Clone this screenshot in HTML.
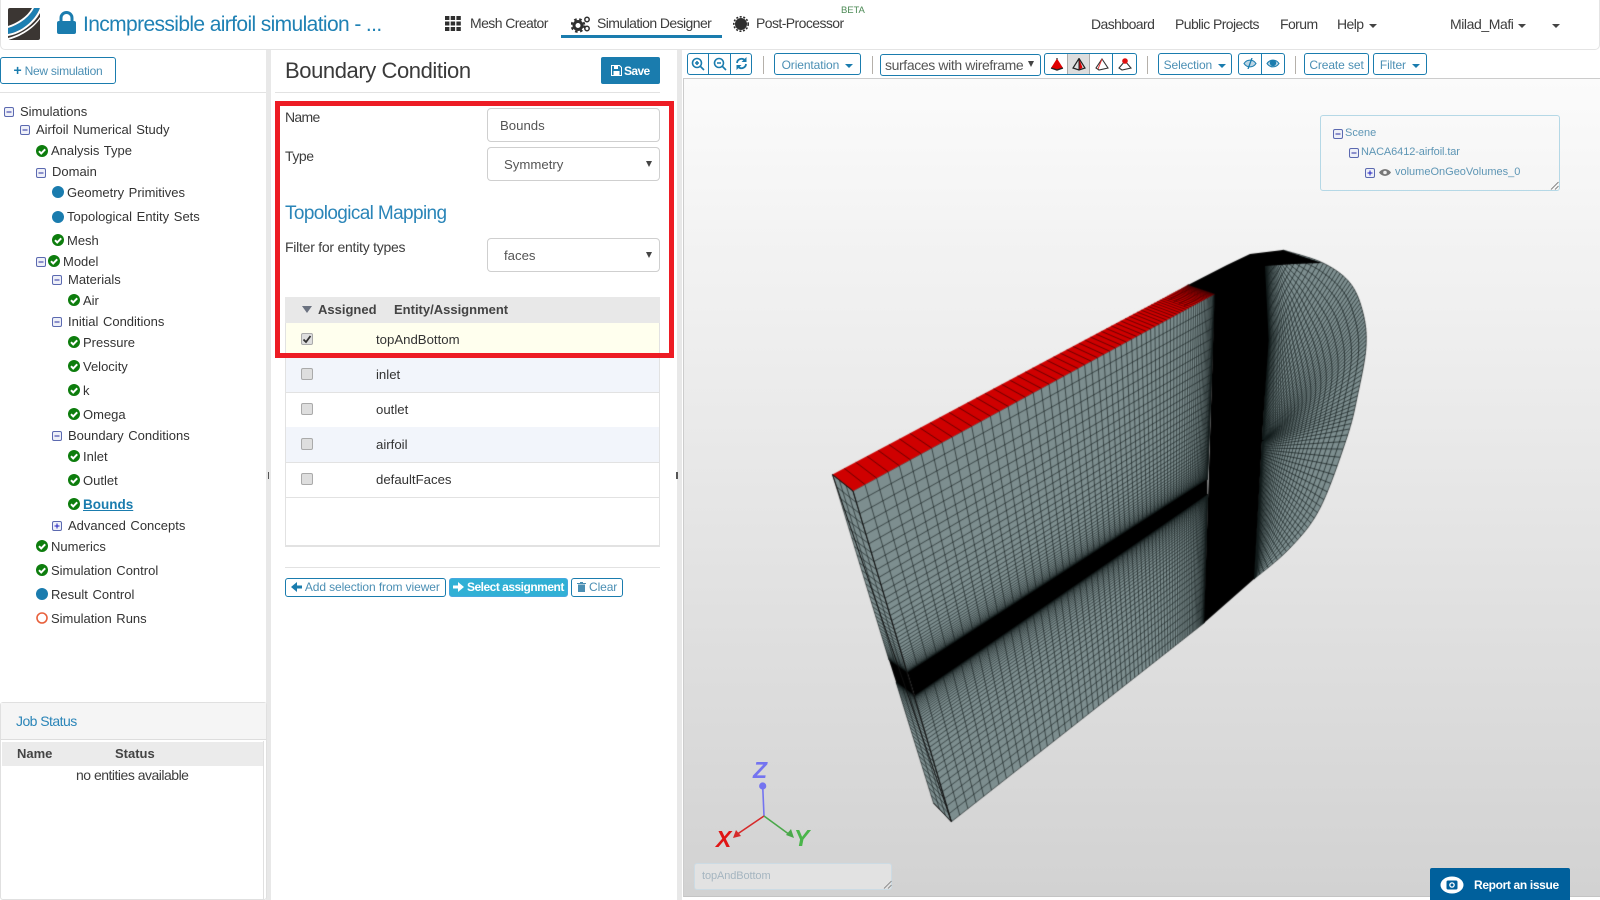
<!DOCTYPE html>
<html><head><meta charset="utf-8"><title>Boundary Condition</title>
<style>
html,body{margin:0;padding:0;background:#fff}
body{position:relative;width:1600px;height:900px;overflow:hidden;font-family:"Liberation Sans",Arial,sans-serif;color:#333}
.a{position:absolute;box-sizing:border-box}
.t{position:absolute;white-space:nowrap;line-height:20px;font-size:14px}
.k{font-size:13px;word-spacing:1px;margin-top:1px}
.r{font-size:13.2px;margin-top:1px}
.l{font-size:14px;letter-spacing:-.45px}
.nav{font-size:14px;letter-spacing:-.58px;color:#3d3d3d}
.ic{position:absolute;width:12px;height:12px;overflow:visible}
.bx{position:absolute;width:10px;height:10px;overflow:visible}
.btn{position:absolute;box-sizing:border-box;border:1px solid #1a7cae;border-radius:3px;color:#4b8fb4;font-size:12px;letter-spacing:-.1px;text-align:center;background:#fff;white-space:nowrap}
.car{display:inline-block;width:0;height:0;border-left:4px solid transparent;border-right:4px solid transparent;border-top:4px solid #1a7cae;vertical-align:middle;margin-left:3px}
.dc{position:absolute;width:0;height:0;border-left:4px solid transparent;border-right:4px solid transparent;border-top:4px solid #444}
.inp{position:absolute;box-sizing:border-box;left:487px;width:173px;height:34px;border:1px solid #cfcfcf;border-radius:4px;background:#fff;line-height:34px;font-size:13.2px;color:#555}
.cb{position:absolute;left:301px;width:12px;height:12px;box-sizing:border-box;background:#dedede;border:1px solid #aaa;border-radius:2px}
.tr{position:absolute;left:286px;width:373px;height:35px;border-bottom:1px solid #e2e2e2;box-sizing:border-box}
.sep{position:absolute;width:1px;height:18px;background:#b5b0aa;top:56px}
</style></head><body>
<svg width="0" height="0" style="position:absolute"><defs>
<symbol id="c" viewBox="0 0 12 12"><circle cx="6" cy="6" r="6" fill="#0d7d0d"/><path d="M3 6.2l2.2 2.2L9.2 4.3" fill="none" stroke="#fff" stroke-width="2"/></symbol>
<symbol id="m" viewBox="0 0 10 10"><rect x=".5" y=".5" width="9" height="9" rx="1.5" fill="#eef0f8" stroke="#5b69b0"/><path d="M2.5 5h5" stroke="#2a2fa0" stroke-width="1"/></symbol>
<symbol id="p" viewBox="0 0 10 10"><rect x=".5" y=".5" width="9" height="9" rx="1.5" fill="#eef0f8" stroke="#5b69b0"/><path d="M2.5 5h5M5 2.5v5" stroke="#2020c0" stroke-width="1"/></symbol>
<symbol id="b" viewBox="0 0 12 12"><circle cx="6" cy="6" r="6" fill="#1a7cae"/></symbol>
</defs></svg>

<!-- header -->
<div class="a" style="left:0;top:0;width:1600px;height:50px;border:1px solid #e4e4e4;border-top:0;border-radius:0 0 5px 5px;background:#fff"></div>
<svg class="a" style="left:8px;top:8px" width="32" height="32" viewBox="0 0 32 32"><rect width="32" height="32" rx="2" fill="#3b3633"/><path d="M0 20C10 17 21 10 26 0h6C27 13 13 24 0 26z" fill="#1c7fb2"/><path d="M0 20C10 17 21 10 26 0h-2C19 9 9 15 0 18z" fill="#fff"/><path d="M0 26C13 24 27 13 32 0v5C26 16 13 26 0 28z" fill="#fff"/><path d="M0 32C12 29 25 21 32 11v-2C25 19 12 27 0 30z" fill="#fff"/></svg>
<svg class="a" style="left:57px;top:11px" width="19" height="23" viewBox="0 0 19 23"><path d="M4 11V7a5.5 5.5 0 0 1 11 0v4" fill="none" stroke="#1a7cae" stroke-width="3"/><rect x="0" y="10" width="19" height="13" rx="2" fill="#1a7cae"/></svg>
<div class="t" style="left:83px;top:15px;font-size:21px;color:#1f81b4;letter-spacing:-.62px">Incmpressible airfoil simulation - ...</div>
<svg class="a" style="left:445px;top:16px" width="16" height="15" viewBox="0 0 16 15" fill="#2f2f2f"><rect width="4.4" height="4"/><rect x="5.7" width="4.4" height="4"/><rect x="11.4" width="4.4" height="4"/><rect y="5.5" width="4.4" height="4"/><rect x="5.7" y="5.5" width="4.4" height="4"/><rect x="11.4" y="5.5" width="4.4" height="4"/><rect y="11" width="4.4" height="4"/><rect x="5.7" y="11" width="4.4" height="4"/><rect x="11.4" y="11" width="4.4" height="4"/></svg>
<div class="t nav" style="left:470px;top:13px">Mesh Creator</div>
<svg class="a" style="left:571px;top:15px" width="20" height="18" viewBox="0 0 20 18"><circle cx="7" cy="10.5" r="4" fill="none" stroke="#2f2f2f" stroke-width="3"/><circle cx="7" cy="10.5" r="6.4" fill="none" stroke="#2f2f2f" stroke-width="2" stroke-dasharray="2.6 2.6"/><circle cx="16" cy="4.5" r="2.2" fill="none" stroke="#2f2f2f" stroke-width="1.5"/><circle cx="16" cy="13.5" r="2.2" fill="none" stroke="#2f2f2f" stroke-width="1.5"/></svg>
<div class="t nav" style="left:597px;top:13px">Simulation Designer</div>
<div class="a" style="left:561px;top:35px;width:161px;height:3px;background:#1a7cae"></div>
<svg class="a" style="left:733px;top:16px" width="16" height="16" viewBox="0 0 16 16"><circle cx="8" cy="8" r="6" fill="#2f2f2f"/><circle cx="8" cy="8" r="7.2" fill="none" stroke="#2f2f2f" stroke-width="1.6" stroke-dasharray="2 1.6"/></svg>
<div class="t nav" style="left:756px;top:13px">Post-Processor</div>
<div class="t" style="left:841px;top:1px;font-size:9.5px;color:#4c8a55;letter-spacing:-.1px">BETA</div>
<div class="t nav" style="left:1091px;top:14px">Dashboard</div>
<div class="t nav" style="left:1175px;top:14px">Public Projects</div>
<div class="t nav" style="left:1280px;top:14px">Forum</div>
<div class="t nav" style="left:1337px;top:14px">Help</div><div class="dc" style="left:1369px;top:24px"></div>
<div class="t nav" style="left:1450px;top:14px;letter-spacing:-.42px">Milad_Mafi</div><div class="dc" style="left:1518px;top:24px"></div>
<div class="dc" style="left:1552px;top:24px"></div>

<!-- dividers -->
<div class="a" style="left:266px;top:50px;width:5px;height:850px;background:#e8e8e8"></div>
<div class="a" style="left:677px;top:50px;width:5px;height:850px;background:#e8e8e8"></div>
<div class="a" style="left:268px;top:472px;width:1px;height:7px;background:#555"></div>
<div class="a" style="left:676px;top:472px;width:2px;height:7px;background:#555"></div>

<!-- left -->
<div class="btn" style="left:0;top:57px;width:116px;height:27px;line-height:25px;letter-spacing:-.25px"><b style="color:#1a7cae;font-size:14px">+</b> New simulation</div>
<div class="a" style="left:0;top:92px;width:266px;height:1px;background:#e2e2e2"></div>

<svg class="bx" style="left:4px;top:107px"><use href="#m"/></svg><div class="t k" style="left:20px;top:101px">Simulations</div>
<svg class="bx" style="left:20px;top:125px"><use href="#m"/></svg><div class="t k" style="left:36px;top:119px">Airfoil Numerical Study</div>
<svg class="ic" style="left:36px;top:145px"><use href="#c"/></svg><div class="t k" style="left:51px;top:140px">Analysis Type</div>
<svg class="bx" style="left:36px;top:168px"><use href="#m"/></svg><div class="t k" style="left:52px;top:161px">Domain</div>
<svg class="ic" style="left:52px;top:186px"><use href="#b"/></svg><div class="t k" style="left:67px;top:182px">Geometry Primitives</div>
<svg class="ic" style="left:52px;top:211px"><use href="#b"/></svg><div class="t k" style="left:67px;top:206px">Topological Entity Sets</div>
<svg class="ic" style="left:52px;top:234px"><use href="#c"/></svg><div class="t k" style="left:67px;top:230px">Mesh</div>
<svg class="bx" style="left:36px;top:257px"><use href="#m"/></svg><svg class="ic" style="left:48px;top:255px"><use href="#c"/></svg><div class="t k" style="left:63px;top:251px">Model</div>
<svg class="bx" style="left:52px;top:275px"><use href="#m"/></svg><div class="t k" style="left:68px;top:269px">Materials</div>
<svg class="ic" style="left:68px;top:294px"><use href="#c"/></svg><div class="t k" style="left:83px;top:290px">Air</div>
<svg class="bx" style="left:52px;top:317px"><use href="#m"/></svg><div class="t k" style="left:68px;top:311px">Initial Conditions</div>
<svg class="ic" style="left:68px;top:336px"><use href="#c"/></svg><div class="t k" style="left:83px;top:332px">Pressure</div>
<svg class="ic" style="left:68px;top:360px"><use href="#c"/></svg><div class="t k" style="left:83px;top:356px">Velocity</div>
<svg class="ic" style="left:68px;top:384px"><use href="#c"/></svg><div class="t k" style="left:83px;top:380px">k</div>
<svg class="ic" style="left:68px;top:408px"><use href="#c"/></svg><div class="t k" style="left:83px;top:404px">Omega</div>
<svg class="bx" style="left:52px;top:431px"><use href="#m"/></svg><div class="t k" style="left:68px;top:425px">Boundary Conditions</div>
<svg class="ic" style="left:68px;top:450px"><use href="#c"/></svg><div class="t k" style="left:83px;top:446px">Inlet</div>
<svg class="ic" style="left:68px;top:474px"><use href="#c"/></svg><div class="t k" style="left:83px;top:470px">Outlet</div>
<svg class="ic" style="left:68px;top:498px"><use href="#c"/></svg><div class="t" style="left:83px;top:495px;color:#1a7cae;font-weight:bold;font-size:13.5px;text-decoration:underline">Bounds</div>
<svg class="bx" style="left:52px;top:521px"><use href="#p"/></svg><div class="t k" style="left:68px;top:515px">Advanced Concepts</div>
<svg class="ic" style="left:36px;top:540px"><use href="#c"/></svg><div class="t k" style="left:51px;top:536px">Numerics</div>
<svg class="ic" style="left:36px;top:564px"><use href="#c"/></svg><div class="t k" style="left:51px;top:560px">Simulation Control</div>
<svg class="ic" style="left:36px;top:588px"><use href="#b"/></svg><div class="t k" style="left:51px;top:584px">Result Control</div>
<svg class="ic" style="left:36px;top:612px"><circle cx="6" cy="6" r="5" fill="none" stroke="#e8603c" stroke-width="1.6"/></svg><div class="t k" style="left:51px;top:608px">Simulation Runs</div>

<!-- job status -->
<div class="a" style="left:0;top:702px;width:267px;height:198px;border:1px solid #e0e0e0;border-radius:3px;background:#fff"></div>
<div class="a" style="left:1px;top:703px;width:265px;height:37px;background:#f5f5f5;border-bottom:1px solid #ddd"></div>
<div class="t" style="left:16px;top:711px;color:#2a85b8;font-size:14px;letter-spacing:-.55px">Job Status</div>
<div class="a" style="left:2px;top:742px;width:261px;height:24px;background:#ebebeb"></div>
<div class="a" style="left:263px;top:741px;width:1px;height:159px;background:#e0e0e0"></div>
<div class="t" style="left:17px;top:744px;font-weight:bold;font-size:13px;color:#444">Name</div>
<div class="t" style="left:115px;top:744px;font-weight:bold;font-size:13px;color:#444">Status</div>
<div class="t" style="left:76px;top:765px;font-size:14px;letter-spacing:-.5px;color:#3d3d3d">no entities available</div>

<!-- middle -->
<div class="t" style="left:285px;top:60px;font-size:22px;letter-spacing:-.42px;color:#3a3a3a;line-height:22px">Boundary Condition</div>
<div class="a" style="left:601px;top:57px;width:59px;height:27px;background:#1a7cae;border-radius:2px"></div>
<svg class="a" style="left:611px;top:65px" width="11" height="11" viewBox="0 0 11 11"><path d="M.5.5h8l2 2v8h-10z" fill="none" stroke="#fff"/><rect x="2.5" y="6" width="6" height="4.5" fill="#fff"/><rect x="3" y="1" width="4" height="3" fill="#fff"/></svg>
<div class="t" style="left:624px;top:61px;color:#fff;font-size:12px;font-weight:bold;letter-spacing:-.6px">Save</div>
<div class="a" style="left:275px;top:92px;width:385px;height:1px;background:#e2e2e2"></div>

<div class="t l" style="left:285px;top:107px;color:#3d3d3d;letter-spacing:-.7px">Name</div>
<div class="inp" style="top:108px;padding-left:12px">Bounds</div>
<div class="t l" style="left:285px;top:146px;color:#3d3d3d">Type</div>
<div class="inp" style="top:147px;padding-left:16px">Symmetry</div>
<div class="dc" style="left:646px;top:161px;border-top-width:6px;border-left-width:3.5px;border-right-width:3.5px"></div>
<div class="t" style="left:285px;top:204px;font-size:19px;color:#2a85b8;letter-spacing:-.62px">Topological Mapping</div>
<div class="t l" style="left:285px;top:237px;color:#3d3d3d;letter-spacing:-.25px">Filter for entity types</div>
<div class="inp" style="top:238px;padding-left:16px">faces</div>
<div class="dc" style="left:646px;top:252px;border-top-width:6px;border-left-width:3.5px;border-right-width:3.5px"></div>

<div class="a" style="left:285px;top:297px;width:375px;height:250px;border:1px solid #e2e2e2;border-bottom-width:2px;background:#fff"></div>
<div class="a" style="left:285px;top:297px;width:375px;height:26px;background:#e8e8e8"></div>
<div class="a" style="left:302px;top:306px;width:0;height:0;border-left:5px solid transparent;border-right:5px solid transparent;border-top:7px solid #6b7280"></div>
<div class="t" style="left:318px;top:300px;font-weight:bold;font-size:13px;color:#444">Assigned</div>
<div class="t" style="left:394px;top:300px;font-weight:bold;font-size:13px;color:#444">Entity/Assignment</div>
<div class="tr" style="top:323px;background:#ffffee"></div>
<div class="tr" style="top:358px;background:#f2f5fb"></div>
<div class="tr" style="top:393px"></div>
<div class="tr" style="top:427px;height:36px;background:#f2f5fb"></div>
<div class="tr" style="top:463px"></div>
<div class="cb" style="top:333px"></div><svg class="a" style="left:302px;top:334px" width="10" height="10" viewBox="0 0 10 10"><path d="M1.5 5.5l2.5 2.5L8.5 2" fill="none" stroke="#333" stroke-width="1.8"/></svg>
<div class="t r" style="left:376px;top:329px">topAndBottom</div>
<div class="cb" style="top:368px"></div><div class="t r" style="left:376px;top:364px">inlet</div>
<div class="cb" style="top:403px"></div><div class="t r" style="left:376px;top:399px">outlet</div>
<div class="cb" style="top:438px"></div><div class="t r" style="left:376px;top:434px">airfoil</div>
<div class="cb" style="top:473px"></div><div class="t r" style="left:376px;top:469px">defaultFaces</div>
<div class="a" style="left:275px;top:101px;width:399px;height:257px;border:5px solid #ed1c24"></div>

<div class="a" style="left:285px;top:567px;width:375px;height:1px;background:#e2e2e2"></div>
<div class="btn" style="left:285px;top:578px;width:161px;height:19px;line-height:17px"><svg width="11" height="10" viewBox="0 0 11 10" style="vertical-align:-1px"><path d="M11 3.5H6V0L0 5l6 5V6.5h5z" fill="#1a7cae"/></svg> Add selection from viewer</div>
<div class="btn" style="left:449px;top:578px;width:119px;height:19px;line-height:17px;background:#31b0d5;border-color:#46a8e0;color:#fff;font-weight:bold;letter-spacing:-.5px"><svg width="11" height="10" viewBox="0 0 11 10" style="vertical-align:-1px"><path d="M0 3.5h5V0l6 5-6 5V6.5H0z" fill="#fff"/></svg> Select assignment</div>
<div class="btn" style="left:571px;top:578px;width:52px;height:19px;line-height:17px"><svg width="9" height="10" viewBox="0 0 9 10" style="vertical-align:-1px"><path d="M1 2.5h7V10H1zM0 1h9v1H0zM3 0h3v1H3z" fill="#4b8fb4"/></svg> Clear</div>

<!-- toolbar -->
<div class="btn" style="left:687px;top:53px;width:65px;height:22px"></div>
<div class="a" style="left:708px;top:53px;width:1px;height:22px;background:#1a7cae"></div><div class="a" style="left:730px;top:53px;width:1px;height:22px;background:#1a7cae"></div>
<svg class="a" style="left:691px;top:57px" width="14" height="14" viewBox="0 0 14 14"><circle cx="6" cy="6" r="4.5" fill="none" stroke="#1a7cae" stroke-width="1.6"/><path d="M9.5 9.5L13 13M4 6h4M6 4v4" stroke="#1a7cae" stroke-width="1.6"/></svg>
<svg class="a" style="left:713px;top:57px" width="14" height="14" viewBox="0 0 14 14"><circle cx="6" cy="6" r="4.5" fill="none" stroke="#1a7cae" stroke-width="1.6"/><path d="M9.5 9.5L13 13M4 6h4" stroke="#1a7cae" stroke-width="1.6"/></svg>
<svg class="a" style="left:735px;top:57px" width="13" height="13" viewBox="0 0 13 13"><path d="M2 6a4.5 4.5 0 0 1 8-2.5M11 7a4.5 4.5 0 0 1-8 2.5" fill="none" stroke="#1a7cae" stroke-width="1.8"/><path d="M11.5 0v5h-5zM1.5 13V8h5z" fill="#1a7cae"/></svg>
<div class="sep" style="left:763px"></div>
<div class="btn" style="left:774px;top:53px;width:87px;height:22px;line-height:22px">Orientation <span class="car"></span></div>
<div class="sep" style="left:872px"></div>
<div class="btn" style="left:880px;top:54px;width:161px;height:22px;line-height:20px;color:#555;font-size:14px;letter-spacing:-.38px;text-align:left;padding-left:4px">surfaces with wireframe</div>
<div class="dc" style="left:1028px;top:61px;border-top-width:6px;border-left-width:3px;border-right-width:3px"></div>
<div class="btn" style="left:1044px;top:53px;width:93px;height:22px"></div>
<div class="a" style="left:1067px;top:54px;width:23px;height:20px;background:#ddd;border-left:1px solid #aaa;border-right:1px solid #aaa"></div>
<div class="a" style="left:1112px;top:53px;width:1px;height:22px;background:#1a7cae"></div>
<svg class="a" style="left:1050px;top:58px" width="14" height="13" viewBox="0 0 14 13"><path d="M7 .5L13 10 7 12 1 10z" fill="#e00000"/><path d="M1 10l6 2 6-2" fill="none" stroke="#222" stroke-width="1.4"/><path d="M7 0v1.5" stroke="#222" stroke-width="1.2"/></svg>
<svg class="a" style="left:1072px;top:58px" width="14" height="13" viewBox="0 0 14 13"><path d="M7 .5L13 10 7 12 1 10z" fill="none" stroke="#222" stroke-width="1.2"/><path d="M7 .5L10.5 9.5 7 12z" fill="#d80000"/><path d="M7 .5V12" stroke="#222"/></svg>
<svg class="a" style="left:1095px;top:58px" width="14" height="13" viewBox="0 0 14 13"><path d="M7 1L13 10 4 12 1 10z" fill="none" stroke="#333" stroke-width="1.1"/><path d="M7 1L3 11" stroke="#e03030" stroke-width="1"/></svg>
<svg class="a" style="left:1118px;top:58px" width="14" height="13" viewBox="0 0 14 13"><path d="M7 3L13 10 4 12 1 10z" fill="none" stroke="#333" stroke-width="1.1"/><circle cx="7" cy="3" r="2.8" fill="#e01010"/></svg>
<div class="sep" style="left:1147px"></div>
<div class="btn" style="left:1158px;top:53px;width:74px;height:22px;line-height:22px">Selection <span class="car"></span></div>
<div class="btn" style="left:1238px;top:53px;width:47px;height:22px"></div>
<div class="a" style="left:1261px;top:53px;width:1px;height:22px;background:#1a7cae"></div>
<svg class="a" style="left:1243px;top:58px" width="14" height="11" viewBox="0 0 14 11"><path d="M1 5.5C4 1 10 1 13 5.5 10 10 4 10 1 5.5z" fill="#bcd6e5" stroke="#1a7cae" stroke-width="1.1"/><path d="M9 0L5 11" stroke="#1a7cae" stroke-width="1.3"/></svg>
<svg class="a" style="left:1266px;top:58px" width="14" height="11" viewBox="0 0 14 11"><path d="M1 5.5C4 1 10 1 13 5.5 10 10 4 10 1 5.5z" fill="#bcd6e5" stroke="#1a7cae" stroke-width="1.1"/><circle cx="7" cy="5" r="3.2" fill="#1a7cae"/></svg>
<div class="sep" style="left:1295px"></div>
<div class="btn" style="left:1304px;top:53px;width:65px;height:22px;line-height:22px">Create set</div>
<div class="btn" style="left:1373px;top:53px;width:54px;height:22px;line-height:22px">Filter <span class="car"></span></div>

<!-- viewer -->
<div class="a" style="left:683px;top:78px;width:917px;height:819px;background:linear-gradient(#fbfbfb,#d2d2d2);border-top:1px solid #ccc;border-left:1px solid #ccc;border-bottom:1px solid #c4c4c4"></div>
<canvas id="mesh" width="916" height="818" class="a" style="left:684px;top:79px"></canvas>

<div class="a" style="left:1320px;top:115px;width:240px;height:76px;border:1px solid #b5d8e6;border-radius:3px"></div>
<svg class="bx" style="left:1333px;top:129px"><use href="#m"/></svg><div class="t" style="left:1345px;top:123px;font-size:11px;color:#5e96b5">Scene</div>
<svg class="bx" style="left:1349px;top:148px"><use href="#m"/></svg><div class="t" style="left:1361px;top:142px;font-size:11px;color:#5e96b5;letter-spacing:-.1px">NACA6412-airfoil.tar</div>
<svg class="bx" style="left:1365px;top:168px"><use href="#p"/></svg>
<svg class="a" style="left:1379px;top:168px" width="12" height="9" viewBox="0 0 12 9"><path d="M0 4.5C3 0 9 0 12 4.500 9 9 3 9 0 4.500z" fill="#777"/><circle cx="6" cy="4.5" r="1.8" fill="#eee"/></svg>
<div class="t" style="left:1395px;top:162px;font-size:11px;color:#5e96b5">volumeOnGeoVolumes_0</div>
<svg class="a" style="left:1550px;top:181px" width="9" height="9" viewBox="0 0 9 9"><path d="M1 8.5L8.5 1M5 8.5L8.5 5" stroke="#666" stroke-width=".8"/></svg>

<svg class="a" style="left:690px;top:750px" width="130" height="100" viewBox="690 750 130 100">
<path d="M764 816L762.7 786" stroke="#7474f0" stroke-width="1.6"/><circle cx="762.7" cy="786" r="3.6" fill="#7474f0"/>
<path d="M764 816L736 835" stroke="#d62a2a" stroke-width="1.6"/><path d="M733 838l3-8 5 6z" fill="#d62a2a"/>
<path d="M764 816L790 835" stroke="#4aa84a" stroke-width="1.6"/><path d="M794 838l-3-9-5 6z" fill="#4aa84a"/>
<text x="753" y="778" font-family="Liberation Sans" font-weight="bold" font-style="italic" font-size="23" fill="#7474f0">Z</text>
<text x="716" y="847" font-family="Liberation Sans" font-weight="bold" font-style="italic" font-size="23" fill="#e01515">X</text>
<text x="794" y="846" font-family="Liberation Sans" font-weight="bold" font-style="italic" font-size="23" fill="#4ab54a">Y</text>
</svg>

<div class="a" style="left:694px;top:863px;width:198px;height:27px;background:#e2e2e2;border:1px solid #ccdbe4;border-radius:3px"></div>
<div class="t" style="left:702px;top:866px;font-size:11px;color:#a5b5c0;letter-spacing:-.1px">topAndBottom</div>
<svg class="a" style="left:883px;top:880px" width="9" height="9" viewBox="0 0 9 9"><path d="M1 8.5L8.5 1M5 8.5L8.5 5" stroke="#777" stroke-width=".8"/></svg>

<div class="a" style="left:1430px;top:868px;width:140px;height:32px;background:#00609c;border-radius:2px 2px 0 0"></div>
<svg class="a" style="left:1440px;top:876px" width="24" height="18" viewBox="0 0 24 18"><ellipse cx="12" cy="9" rx="11.5" ry="8.5" fill="#fff"/><rect x="6.5" y="4.5" width="11" height="9" rx="1.5" fill="#00609c"/><circle cx="12" cy="9" r="2.8" fill="#fff"/><circle cx="12" cy="9" r="1.5" fill="#00609c"/></svg>
<div class="t" style="left:1474px;top:875px;font-size:12px;font-weight:bold;color:#fff;letter-spacing:-.35px">Report an issue</div>

<script>
(function(){
var x=document.getElementById('mesh').getContext('2d');x.translate(-684,-79);
function P(a,f){x.beginPath();a.forEach(function(p,i){i?x.lineTo(p[0],p[1]):x.moveTo(p[0],p[1])});x.closePath();x.fillStyle=f;x.fill()}
function bl(A,B,C,D,u,v){return [(A[0]*(1-u)+B[0]*u)*(1-v)+(D[0]*(1-u)+C[0]*u)*v,(A[1]*(1-u)+B[1]*u)*(1-v)+(D[1]*(1-u)+C[1]*u)*v]}
function L(a,b){x.moveTo(a[0],a[1]);x.lineTo(b[0],b[1])}
function grid(A,B,C,D,us,vs,col,w){x.beginPath();us.forEach(function(u){L(bl(A,B,C,D,u,0),bl(A,B,C,D,u,1))});vs.forEach(function(v){L(bl(A,B,C,D,0,v),bl(A,B,C,D,1,v))});x.strokeStyle=col;x.lineWidth=w;x.stroke()}
function r(n,f){var a=[];for(var i=0;i<=n;i++)a.push(f(i/n));return a}
var S='#7d8e8f',K='rgba(18,26,26,.85)',W=.72;
var us=r(72,function(t){return 1-Math.pow(1-t,2.4)});
var vs=r(52,function(t){return 1-Math.pow(1-t,3.4)});
var A=[853,491],B=[1214.6,294],C=[1207.5,479],D=[907.5,672.5],E=[914.6,695.4],F=[1207.5,494.5],G=[1204,623],H=[951.4,821.7];
var oA=[832.5,474.6],oR=[1188,285],oD=[889,660],oE=[896,682],oH=[933.5,803];
P([oA,A,D,oD],S);P([oE,E,H,oH],S);
var cs=r(3,function(t){return t});
grid(oA,A,D,oD,cs,vs,K,W);
grid(oH,H,E,oE,cs,vs,K,W);
P([oD,D,E,oE],'#000');
P([A,B,C,D],S);P([E,F,G,H],S);
grid(A,B,C,D,us,vs,K,W);
grid(H,G,F,E,us,vs,K,W);
P([D,C,F,E],'#000');
/* red top */
P([oA,oR,B,A],'#cf0000');
grid(oA,oR,B,A,us,[],'rgba(70,0,0,.95)',.8);
x.beginPath();[.2,.4,.6,.8].forEach(function(v){L(bl(oA,oR,B,A,.93,v),bl(oA,oR,B,A,1,v))});x.strokeStyle='rgba(70,0,0,.9)';x.lineWidth=.7;x.stroke();
/* curved patch */
var K0=[[1283,250],[1323,263],[1350,283],[1363,313],[1366,347],[1358,393],[1347,437],[1320,508],[1290,548],[1254,579]];
function cr(t){var n=K0.length-1,f=Math.min(t,0.9999)*n,i=Math.floor(f),s=f-i,p0=K0[Math.max(i-1,0)],p1=K0[i],p2=K0[i+1],p3=K0[Math.min(i+2,n)];
return [0,1].map(function(k){return .5*(2*p1[k]+(p2[k]-p0[k])*s+(2*p0[k]-5*p1[k]+4*p2[k]-p3[k])*s*s+(3*p1[k]-p0[k]-3*p2[k]+p3[k])*s*s*s)})}
function inner(t){var f=.56,a=t<.5?f*(1-Math.pow(1-2*t,3)):f+(1-f)*Math.pow(2*t-1,3);
var y=265+(579-265)*a;var xx=y<340?1265+(y-265)*.05:1268.7-(y-340)*.06;return [xx,y]}
var outline=[];for(var i=0;i<=80;i++)outline.push(cr(i/80));
P([[1265,265]].concat(outline).concat([[1254,579]]),S);
function pt(t,s){var a=inner(t),b=cr(t);return [a[0]*(1-s)+b[0]*s,a[1]*(1-s)+b[1]*s]}
x.beginPath();for(var i=0;i<=80;i++){var t=i/80;x.moveTo.apply(x,pt(t,0));x.lineTo.apply(x,pt(t,1))}
for(var j=1;j<=40;j++){var s=Math.pow(j/40,3);for(var i=0;i<=90;i++){var q=pt(i/90,s);i?x.lineTo(q[0],q[1]):x.moveTo(q[0],q[1])}}
x.strokeStyle=K;x.lineWidth=.8;x.stroke();
/* vertical black band */
P([B,oR,[1227,265],[1250,254],[1283,250],[1322,263],[1295,264],[1265,266],[1268.7,340],[1263,424],[1254,579],G],'#000');
/* frame */
x.beginPath();L(oA,H);L(oA,A);L(A,H);L(oH,H);x.strokeStyle='#111';x.lineWidth=1;x.stroke();
})();
</script>
</body></html>
